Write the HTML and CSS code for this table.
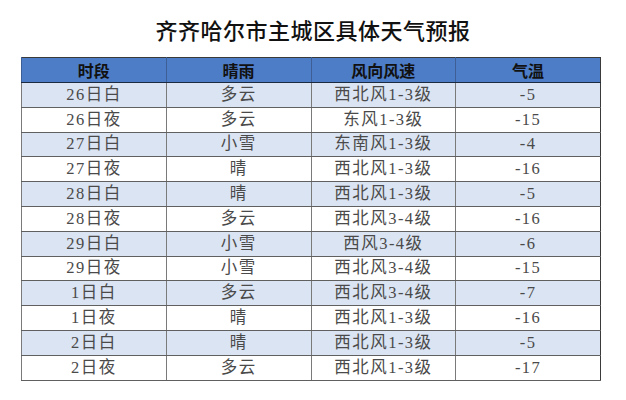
FILE: index.html
```html
<!DOCTYPE html>
<html lang="zh-CN">
<head>
<meta charset="utf-8">
<title>齐齐哈尔市主城区具体天气预报</title>
<link rel="stylesheet" href="styles.css">
</head>
<body>
<div class="page">
  <h1 class="title">齐齐哈尔市主城区具体天气预报</h1>
  <table class="forecast">
    <thead>
      <tr><th>时段</th><th>晴雨</th><th>风向风速</th><th>气温</th></tr>
    </thead>
    <tbody>
      <tr class="shade"><td>26日白</td><td>多云</td><td>西北风1-3级</td><td>-5</td></tr>
      <tr><td>26日夜</td><td>多云</td><td>东风1-3级</td><td>-15</td></tr>
      <tr class="shade"><td>27日白</td><td>小雪</td><td>东南风1-3级</td><td>-4</td></tr>
      <tr><td>27日夜</td><td>晴</td><td>西北风1-3级</td><td>-16</td></tr>
      <tr class="shade"><td>28日白</td><td>晴</td><td>西北风1-3级</td><td>-5</td></tr>
      <tr><td>28日夜</td><td>多云</td><td>西北风3-4级</td><td>-16</td></tr>
      <tr class="shade"><td>29日白</td><td>小雪</td><td>西风3-4级</td><td>-6</td></tr>
      <tr><td>29日夜</td><td>小雪</td><td>西北风3-4级</td><td>-15</td></tr>
      <tr class="shade"><td>1日白</td><td>多云</td><td>西北风3-4级</td><td>-7</td></tr>
      <tr><td>1日夜</td><td>晴</td><td>西北风1-3级</td><td>-16</td></tr>
      <tr class="shade"><td>2日白</td><td>晴</td><td>西北风1-3级</td><td>-5</td></tr>
      <tr><td>2日夜</td><td>多云</td><td>西北风1-3级</td><td>-17</td></tr>
    </tbody>
  </table>
</div>
</body>
</html>
```
FILE: styles.css
```css
html, body {
  margin: 0;
  padding: 0;
  background: #ffffff;
}
.page {
  width: 626px;
  height: 400px;
  padding-top: 16px;
  box-sizing: border-box;
}
.title {
  margin: 0 0 14px 0;
  text-align: center;
  font-family: "Noto Sans CJK SC", sans-serif;
  font-size: 22px;
  font-weight: 500;
  line-height: 27px;
  letter-spacing: 0.5px;
  color: #111111;
}
.forecast {
  margin-left: 21px;
  width: 580px;
  border-collapse: collapse;
  table-layout: fixed;
  border: 1px solid #3a3a3a;
}
.forecast th {
  height: 24px;
  padding: 0;
  background: #4d7dc6;
  color: #111111;
  font-family: "Noto Sans CJK SC", sans-serif;
  font-size: 16px;
  font-weight: 700;
  border-left: 1px solid #3d5f95;
  border-bottom: 1px solid #1c2a40;
  text-align: center;
}
.forecast td {
  height: 23.8px;
  padding: 0;
  font-family: "Liberation Serif", "Noto Sans CJK SC", serif;
  font-size: 16.5px;
  color: #4a4a4a;
  letter-spacing: 1.5px;
  text-align: center;
  border-left: 1px solid #7a7a7a;
  border-bottom: 1px solid #606060;
  line-height: 20px;
}
.forecast .shade td {
  background: #dbe4f2;
}
```
